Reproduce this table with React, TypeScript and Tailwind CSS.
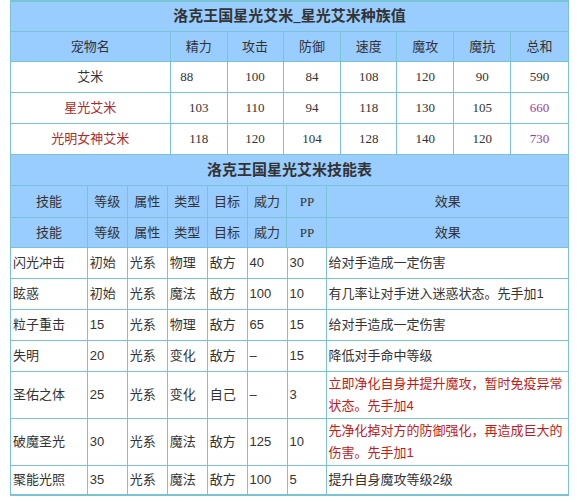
const line = 'border-[#78c4d2]';

const statCols = ['w-[160px]', 'w-[57px]', 'w-[56px]', 'w-[58px]', 'w-[56px]', 'w-[57px]', 'w-[57px]', 'w-[58px]'];
const statHead = ['宠物名', '精力', '攻击', '防御', '速度', '魔攻', '魔抗', '总和'];
const statRows = [
  { name: '艾米', red: false, vals: ['88', '100', '84', '108', '120', '90', '590'] },
  { name: '星光艾米', red: true, vals: ['103', '110', '94', '118', '130', '105', '660'] },
  { name: '光明女神艾米', red: true, vals: ['118', '120', '104', '128', '140', '120', '730'] },
];

const skillCols = ['w-[77px]', 'w-[40px]', 'w-[40px]', 'w-[40px]', 'w-[40px]', 'w-[40px]', 'w-[40px]', 'w-[242px]'];
const skillHead = ['技能', '等级', '属性', '类型', '目标', '威力', 'PP', '效果'];
const skills: { cells: string[]; effect: string[]; red?: boolean; tall?: boolean }[] = [
  { cells: ['闪光冲击', '初始', '光系', '物理', '敌方', '40', '30'], effect: ['给对手造成一定伤害'] },
  { cells: ['眩惑', '初始', '光系', '魔法', '敌方', '100', '10'], effect: ['有几率让对手进入迷惑状态。先手加1'] },
  { cells: ['粒子重击', '15', '光系', '物理', '敌方', '65', '15'], effect: ['给对手造成一定伤害'] },
  { cells: ['失明', '20', '光系', '变化', '敌方', '–', '15'], effect: ['降低对手命中等级'] },
  { cells: ['圣佑之体', '25', '光系', '变化', '自己', '–', '3'], effect: ['立即净化自身并提升魔攻，暂时免疫异常', '状态。先手加4'], red: true, tall: true },
  { cells: ['破魔圣光', '30', '光系', '魔法', '敌方', '125', '10'], effect: ['先净化掉对方的防御强化，再造成巨大的', '伤害。先手加1'], red: true, tall: true },
  { cells: ['聚能光照', '35', '光系', '魔法', '敌方', '100', '5'], effect: ['提升自身魔攻等级2级'] },
];

function HeadRow({ cols, labels, h }: { cols: string[]; labels: string[]; h: string }) {
  return (
    <div className={`flex ${h} border-b ${line} bg-[#99ccff]`}>
      {labels.map((l, i) => (
        <div key={i} className={`${cols[i]} flex items-center justify-center border-r ${line} text-[13px] text-[#333]`}>
          {l}
        </div>
      ))}
    </div>
  );
}

export default function App() {
  return (
    <div className="bg-white pl-[10px] font-['Liberation_Serif','Noto_Sans_CJK_SC',serif]">
      <div className={`w-[559px] border-l border-t-2 ${line}`}>
        {/* 种族值 */}
        <div className={`flex h-[30px] items-center justify-center border-b border-r ${line} bg-[#99ccff] text-[15px] font-bold text-[#333]`}>
          洛克王国星光艾米_星光艾米种族值
        </div>
        <HeadRow cols={statCols} labels={statHead} h="h-[30px]" />
        {statRows.map((r, ri) => (
          <div key={ri} className={`flex h-[31px] border-b ${line} bg-white`}>
            <div
              className={`${statCols[0]} flex items-center justify-center border-r ${line} text-[13px] ${r.red ? 'text-[#b0282a]' : 'text-[#333]'}`}
            >
              {r.name}
            </div>
            {r.vals.map((v, vi) => (
              <div
                key={vi}
                className={`${statCols[vi + 1]} flex items-center justify-center border-r ${line} text-[13px] ${
                  vi === 6 && ri > 0 ? 'text-[#9b3ba0]' : 'text-[#333]'
                } ${ri === 0 && vi === 0 ? 'pr-[24px]' : ''}`}
              >
                {v}
              </div>
            ))}
          </div>
        ))}

        {/* 技能表 */}
        <div className={`flex h-[31px] items-center justify-center border-b border-r ${line} bg-[#99ccff] text-[15px] font-bold text-[#333]`}>
          洛克王国星光艾米技能表
        </div>
        <HeadRow cols={skillCols} labels={skillHead} h="h-[32px]" />
        <HeadRow cols={skillCols} labels={skillHead} h="h-[30px]" />
        <div className="font-['Liberation_Sans','Noto_Sans_CJK_SC',sans-serif]">
          {skills.map((s, si) => {
            const last = si === skills.length - 1;
            return (
              <div
                key={si}
                className={`flex bg-white ${s.tall ? 'h-[47px]' : last ? 'h-[30px]' : 'h-[31px]'} ${last ? 'border-b-2' : 'border-b'} ${line}`}
              >
                {s.cells.map((c, ci) => (
                  <div key={ci} className={`${skillCols[ci]} flex items-center border-r ${line} pl-[2px] text-[13px] text-[#333]`}>
                    {c}
                  </div>
                ))}
                <div
                  className={`${skillCols[7]} flex flex-col justify-center border-r ${line} pl-[1px] text-[13px] leading-[22px] ${
                    s.red ? 'text-[#c41a1a]' : 'text-[#333]'
                  }`}
                >
                  {s.effect.map((e, ei) => (
                    <div key={ei} className="whitespace-nowrap">
                      {e}
                    </div>
                  ))}
                </div>
              </div>
            );
          })}
        </div>
      </div>
    </div>
  );
}
